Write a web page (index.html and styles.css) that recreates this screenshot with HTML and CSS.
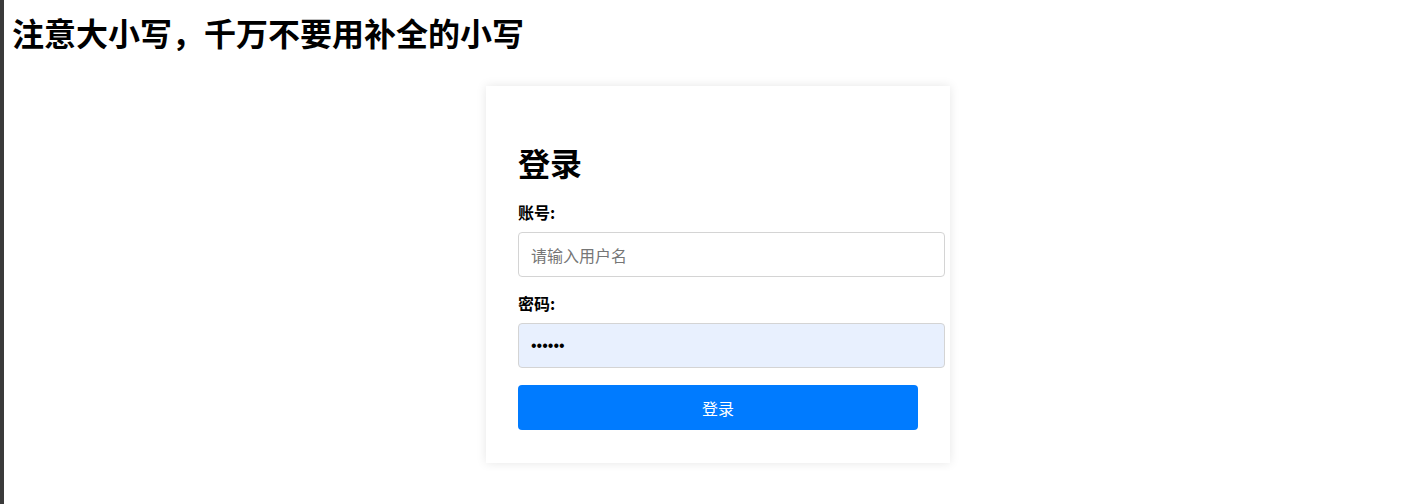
FILE: index.html
```html
<!DOCTYPE html>
<html lang="zh-CN">
<head>
<meta charset="utf-8">
<title>登录</title>
<link rel="stylesheet" href="styles.css">
</head>
<body>
<h1 class="notice">注意大小写，千万不要用补全的小写</h1>
<div class="wrap">
  <form class="card">
    <h2 class="card-title">登录</h2>
    <label class="field-label" for="user">账号:</label>
    <input class="field-input" id="user" type="text" placeholder="请输入用户名">
    <label class="field-label" for="pass">密码:</label>
    <input class="field-input filled" id="pass" type="password" value="123456">
    <button class="submit" type="button">登录</button>
  </form>
</div>
</body>
</html>
```
FILE: styles.css
```css
html {
  border-left: 4px solid #3a3a3a;
  min-height: 100%;
  box-sizing: border-box;
}
body {
  margin: 0;
  padding: 8px;
  font-family: "Noto Sans CJK SC", "Liberation Sans", sans-serif;
  color: #000;
  background: #fff;
}
.notice {
  font-size: 32px;
  font-weight: bold;
  margin: 1px 0 0 0;
  line-height: 46px;
}
.wrap {
  display: flex;
  justify-content: center;
  padding-left: 18px;
  margin-top: 31px;
}
.card {
  width: 400px;
  padding: 32px 32px 33px 32px;
  background: #fff;
  box-shadow: 0 0 10px rgba(0, 0, 0, 0.1);
  display: flex;
  flex-direction: column;
}
.card-title {
  font-size: 32px;
  font-weight: bold;
  margin: 21px 0 16px 0;
  line-height: 46px;
}
.field-label {
  font-size: 16px;
  font-weight: bold;
  line-height: 23px;
  margin-bottom: 8px;
}
.field-input {
  box-sizing: border-box;
  width: 427px;
  height: 45px;
  padding: 0 12px;
  font-size: 16px;
  border: 1px solid #d4d4d4;
  border-radius: 4px;
  font-family: "Noto Sans CJK SC", "Liberation Sans", sans-serif;
  margin: 0 0 15px 0;
  outline: none;
  color: #000;
  background: #fff;
}
.field-input::placeholder {
  color: #767676;
}
.field-input.filled {
  background: #e8f0fe;
  font-family: "Liberation Sans", sans-serif;
  margin-bottom: 17px;
}
.submit {
  width: 400px;
  height: 45px;
  background: #007bff;
  color: #fff;
  border: none;
  border-radius: 4px;
  font-size: 16px;
  font-family: "Noto Sans CJK SC", "Liberation Sans", sans-serif;
}
```
